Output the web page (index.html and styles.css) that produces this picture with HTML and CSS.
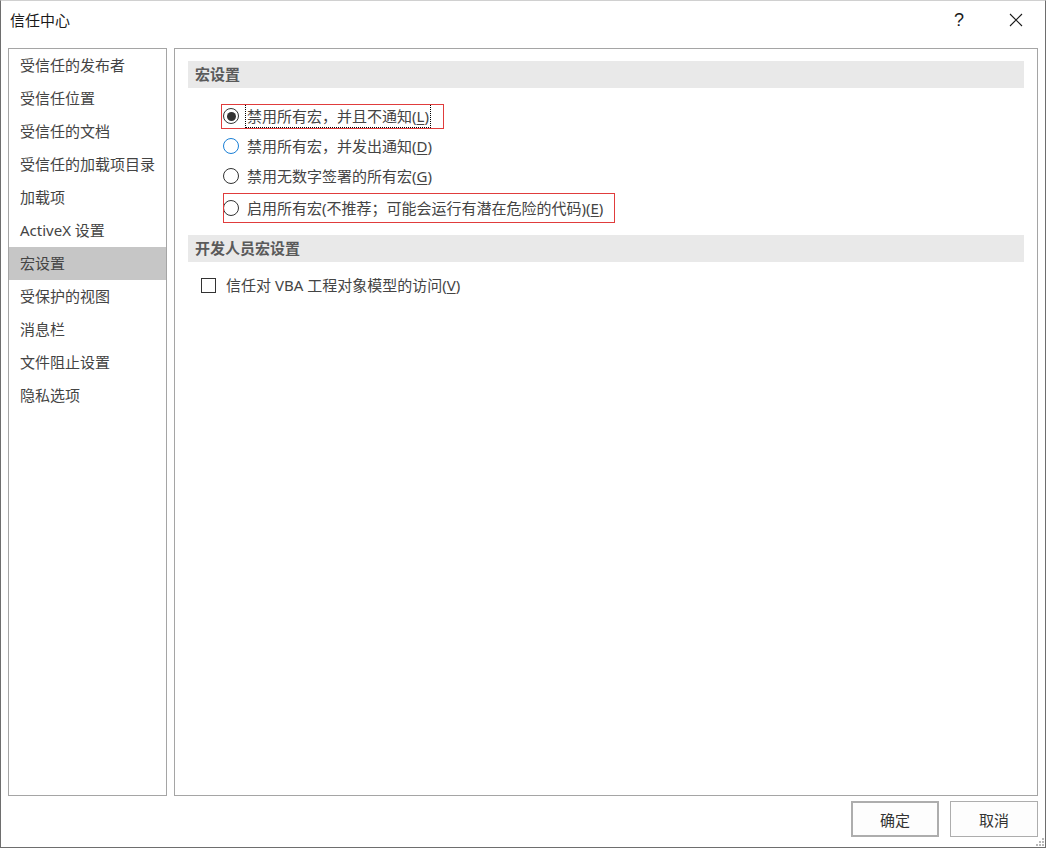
FILE: index.html
```html
<!DOCTYPE html>
<html lang="zh-CN">
<head>
<meta charset="utf-8">
<title>信任中心</title>
<link rel="stylesheet" href="styles.css">
</head>
<body>
<div class="window">
  <div class="titlebar">
    <div class="title">信任中心</div>
    <div class="controls">
      <div class="ctl help">?</div>
      <div class="ctl close">
        <svg width="14" height="14" viewBox="0 0 14 14"><path d="M1 1 L13 13 M13 1 L1 13" stroke="#1a1a1a" stroke-width="1.1" fill="none"/></svg>
      </div>
    </div>
  </div>
  <div class="main">
    <nav class="nav">
      <div class="nav-item">受信任的发布者</div>
      <div class="nav-item">受信任位置</div>
      <div class="nav-item">受信任的文档</div>
      <div class="nav-item">受信任的加载项目录</div>
      <div class="nav-item">加载项</div>
      <div class="nav-item">ActiveX 设置</div>
      <div class="nav-item selected">宏设置</div>
      <div class="nav-item">受保护的视图</div>
      <div class="nav-item">消息栏</div>
      <div class="nav-item">文件阻止设置</div>
      <div class="nav-item">隐私选项</div>
    </nav>
    <section class="content">
      <div class="section-head">宏设置</div>
      <div class="radio-list">
        <div class="row"><span class="option marked-1"><span class="radio checked"></span><span class="label focus">禁用所有宏，并且不通知(<u>L</u>)</span></span></div>
        <div class="row"><span class="option"><span class="radio hover"></span><span class="label">禁用所有宏，并发出通知(<u>D</u>)</span></span></div>
        <div class="row"><span class="option"><span class="radio"></span><span class="label">禁用无数字签署的所有宏(<u>G</u>)</span></span></div>
        <div class="row row-last"><span class="option marked-2"><span class="radio"></span><span class="label">启用所有宏(不推荐；可能会运行有潜在危险的代码)(<u>E</u>)</span></span></div>
      </div>
      <div class="section-head second">开发人员宏设置</div>
      <div class="check-row"><span class="checkbox"></span><span class="label">信任对 VBA 工程对象模型的访问(<u>V</u>)</span></div>
    </section>
  </div>
  <div class="footer">
    <div class="btn default">确定</div>
    <div class="btn">取消</div>
    <svg class="grip" width="8" height="8" viewBox="0 0 8 8">
      <rect x="6" y="0" width="2" height="2" fill="#b8b8b8"/>
      <rect x="3" y="3" width="2" height="2" fill="#b8b8b8"/>
      <rect x="6" y="3" width="2" height="2" fill="#b8b8b8"/>
      <rect x="0" y="6" width="2" height="2" fill="#b8b8b8"/>
      <rect x="3" y="6" width="2" height="2" fill="#b8b8b8"/>
      <rect x="6" y="6" width="2" height="2" fill="#b8b8b8"/>
    </svg>
  </div>
</div>
</body>
</html>
```

FILE: styles.css
```css
* { box-sizing: border-box; }
html, body { margin: 0; padding: 0; background: #fff; }
body {
  font-family: "Noto Sans", "Noto Sans CJK SC", sans-serif;
  font-size: 15px;
  color: #444;
}
.window {
  width: 1046px;
  height: 848px;
  border: 1px solid #6e6e6e;
  border-top-color: #d0d0d0;
  display: flex;
  flex-direction: column;
  background: #fff;
}
.titlebar {
  height: 47px;
  display: flex;
  align-items: flex-start;
  justify-content: space-between;
}
.title {
  margin-top: 9px;
  margin-left: 9px;
  line-height: 20px;
  color: #1a1a1a;
  font-size: 15px;
}
.controls {
  display: flex;
  gap: 11px;
  padding-right: 6px;
}
.ctl {
  width: 46px;
  height: 38px;
  display: flex;
  align-items: center;
  justify-content: center;
  color: #1a1a1a;
}
.help { font-size: 18px; font-family: "Liberation Sans", sans-serif; }
.main {
  height: 748px;
  display: flex;
  gap: 7px;
  padding: 0 7px;
}
.nav {
  width: 159px;
  border: 1px solid #a5a5a5;
  display: flex;
  flex-direction: column;
}
.nav-item {
  height: 33px;
  line-height: 33px;
  padding-left: 11px;
  color: #444;
  white-space: nowrap;
}
.nav-item.selected { background: #c6c6c6; }
.content {
  flex: 1;
  border: 1px solid #a5a5a5;
  padding: 12px 13px;
}
.section-head {
  height: 27px;
  line-height: 27px;
  background: #e9e9e9;
  padding-left: 7px;
  font-weight: bold;
  color: #5a5a5a;
}
.section-head.second { margin-top: 12px; }
.radio-list {
  margin-top: 13px;
  padding-left: 35px;
}
.row {
  height: 30px;
  display: flex;
  align-items: center;
}
.row-last { margin-top: 2px; }
.option {
  position: relative;
  display: inline-flex;
  align-items: center;
  gap: 8px;
  height: 20px;
}
.label { line-height: 20px; white-space: nowrap; color: #444; }
.label u { text-decoration-thickness: 1px; text-underline-offset: 2px; }
.radio {
  width: 16px;
  height: 16px;
  border: 1px solid #333;
  border-radius: 50%;
  display: inline-flex;
  align-items: center;
  justify-content: center;
  flex: none;
}
.radio.hover { border-color: #1a7fd6; }
.radio.checked::before {
  content: "";
  width: 9px;
  height: 9px;
  border-radius: 50%;
  background: #333;
}
.focus {
  outline: 1px dotted #000;
  outline-offset: 1px;
}
.marked-1::after {
  content: "";
  position: absolute;
  left: -2px;
  right: -15px;
  top: -2px;
  bottom: -3px;
  border: 1px solid #e03c3c;
}
.marked-2::after {
  content: "";
  position: absolute;
  left: 0;
  right: -12px;
  top: -5px;
  bottom: -5px;
  border: 1px solid #e03c3c;
}
.check-row {
  margin-top: 8px;
  height: 30px;
  display: flex;
  align-items: center;
  gap: 10px;
  padding-left: 13px;
}
.checkbox {
  width: 15px;
  height: 15px;
  border: 1px solid #333;
  flex: none;
}
.footer {
  flex: 1;
  position: relative;
  display: flex;
  justify-content: flex-end;
  align-items: flex-start;
  gap: 11px;
  padding: 5px 7px 0 0;
}
.btn {
  width: 88px;
  height: 36px;
  border: 1px solid #adadad;
  background: #fdfdfd;
  display: flex;
  align-items: center;
  justify-content: center;
  color: #333;
}
.btn.default { border: 2px solid #adadad; }
.grip {
  position: absolute;
  right: 1px;
  bottom: 1px;
}
```
